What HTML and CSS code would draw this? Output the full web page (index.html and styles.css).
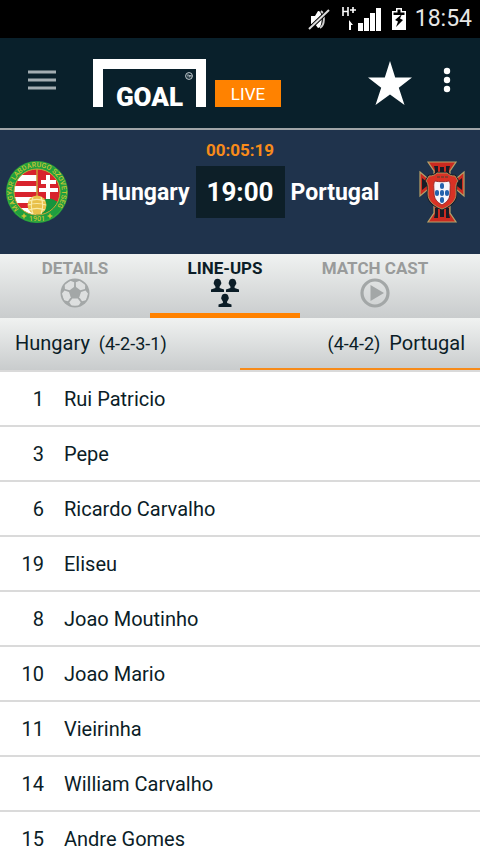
FILE: index.html
```html
<!DOCTYPE html>
<html lang="en">
<head>
  <meta charset="UTF-8">
  <meta name="viewport" content="width=device-width, initial-scale=1.0">
  <title>Hungary - Portugal | Goal Live</title>
  <link rel="stylesheet" href="styles.css">
</head>
<body>
  <div class="status-bar">
    <svg class="mute-icon" width="22" height="24" viewBox="0 0 22 24">
      <path d="M3 9h4l3-5c5-1 5 17 0 17l-3-4H3z" fill="#fff"/>
      <path d="M13 4c4 3 4 14-1 17" fill="none" stroke="#ccc" stroke-width="2"/>
      <path d="M1 22L21 3" stroke="#000" stroke-width="4"/>
      <path d="M1 22L21 3" stroke="#ddd" stroke-width="2"/>
    </svg>
    <svg class="signal-icon" width="40" height="26" viewBox="0 0 40 26">
      <path d="M2 1v9M7 1v9M2 5.500h5M9 4h6M12 1v6" fill="none" stroke="#fff" stroke-width="1.600"/>
      <path d="M8 14l4 5H10v5H8z" fill="#fff"/>
      <path d="M17 17h5v8h-5zM23 12h5v13h-5zM29 7h5v18h-5zM35 2h5v23h-5z" fill="#fff"/>
    </svg>
    <svg class="battery-icon" width="14" height="24" viewBox="0 0 14 24">
      <path d="M4 1h6v3h4v19H0V4h4z" fill="#fff"/>
      <path d="M5.500 2.500h3v3h4V8h-11V5.500h4z" fill="#000"/>
      <path d="M10 7L3 13l3 1.500L4 20l7-7-3-1.500z" fill="#000"/>
    </svg>
    <span class="clock">18:54</span>
  </div>

  <header class="app-bar">
    <button class="icon-button menu" aria-label="Menu">
      <svg width="28" height="20" viewBox="0 0 28 20"><path d="M0 2h28M0 10h28M0 18h28" stroke="#a3adb2" stroke-width="3"/></svg>
    </button>
    <a class="brand" href="#">
      <span class="logo">GOAL
        <svg class="trademark" width="8" height="8" viewBox="0 0 8 8"><circle cx="4" cy="4" r="3.400" fill="none" stroke="#c5ced2"/><path d="M2 3h2M3 3v2.500M4.500 5.500V3l.8 1.200L6 3v2.500" fill="none" stroke="#c5ced2" stroke-width=".7"/></svg>
      </span>
      <span class="live">LIVE</span>
    </a>
    <button class="icon-button favourite" aria-label="Favourite">
      <svg width="44" height="44" viewBox="0 0 44 44"><path d="M22 0l5.200 16.500H44L30.800 26.800 36.500 44 22 33.500 7.500 44l5.700-17.200L0 16.500h16.800z" fill="#fff"/></svg>
    </button>
    <button class="icon-button more" aria-label="More options">
      <svg width="8" height="26" viewBox="0 0 8 26" fill="#fff"><circle cx="4" cy="4" r="3.200"/><circle cx="4" cy="13" r="3.200"/><circle cx="4" cy="22" r="3.200"/></svg>
    </button>
  </header>

  <section class="match">
    <div class="countdown">00:05:19</div>
    <div class="match-row">
      <svg class="crest" width="62" height="62" viewBox="0 0 62 62">
        <defs>
          <clipPath id="inner"><circle cx="31" cy="31" r="23"/></clipPath>
          <path id="ring" d="M13 48A24.800 24.800 0 1 1 49 48"/>
        </defs>
        <circle cx="31" cy="31" r="31" fill="#1f9f3f"/>
        <circle cx="31" cy="31" r="30" fill="none" stroke="#3aa93c"/>
        <g clip-path="url(#inner)">
          <path d="M8 8h46v46H8z" fill="#d8232d"/>
          <path d="M8 14h23v6H8zM8 25h23v6H8zM8 36h23v6H8zM8 47h23v7H8z" fill="#fff"/>
          <path d="M30 54c0-10 5-15 12-17 6 1 9 4 12 5v12z" fill="#16943c"/>
          <path d="M40 14h4v5h6v4h-6v4h8v4h-8v7h-4v-7h-7v-4h7v-4h-5v-4h5z" fill="#fff"/>
          <path d="M31 8v30" stroke="#c99e36" stroke-width="1.500"/>
        </g>
        <circle cx="31" cy="31" r="23" fill="none" stroke="#c2ae3a"/>
        <text class="crest-text"><textPath href="#ring">MAGYAR LABDARUGO SZOVETSEG</textPath></text>
        <circle cx="31" cy="44" r="9.500" fill="#e8c04a"/>
        <path d="M23 40c5-2 11-2 16 0M22 44c6-2 12-2 18 0M23 49c5-2 11-2 16 0M27 36c-2 5-2 12 0 17M35 36c2 5 2 12 0 17" fill="none" stroke="#f9eba8" stroke-width="1.200"/>
        <text class="crest-text" x="31" y="60" text-anchor="middle">1901</text>
        <path d="M18 52l1 2 2 1-2 1-1 2-1-2-2-1 2-1zM44 52l1 2 2 1-2 1-1 2-1-2-2-1 2-1z" fill="#c8c235"/>
      </svg>
      <h1 class="team home">Hungary</h1>
      <div class="kickoff">19:00</div>
      <h1 class="team">Portugal</h1>
      <svg class="crest" width="62" height="62" viewBox="0 0 62 62">
        <g fill="#cb2a20" stroke="#b5a268" stroke-width="1.200">
          <path d="M16 1h28l-6 9v42l6 9H16l6-9V10z"/>
          <path d="M8 11l7 6h30l7-6v24l-7-6H15l-7 6z"/>
        </g>
        <path d="M22 5h4v10h-3V9zM38 5h-4v10h3V9zM22 57h4V47h-3v6zM38 57h-4V47h3v6zM10 17l5 4v4l-5 4zM50 17l-5 4v4l5 4z" fill="#191c26"/>
        <path d="M28 6h4v6h-4zM28 48h4v8h-4z" fill="#191c26"/>
        <path d="M17 15c4 0 6-1 8-3h10c2 2 4 3 8 3l3 5c-3 3-2 8-2 13 0 7-6 12-14 15-8-3-14-8-14-15 0-5 1-10-2-13z" fill="#d93225" stroke="#191c26" stroke-width="2.400"/>
        <path d="M17 15c4 0 6-1 8-3h10c2 2 4 3 8 3l3 5c-3 3-2 8-2 13 0 7-6 12-14 15-8-3-14-8-14-15 0-5 1-10-2-13z" fill="#d93225" stroke="#b5a268" stroke-width=".8"/>
        <path d="M23 20c4 1 10 1 14 0 2 2 1 6 1 12s-3 9-8 12c-5-3-8-6-8-12s-1-10 1-12z" fill="#f6f6fb" stroke="#9c2a28"/>
        <g fill="#2463ad"><rect x="28" y="22" width="4" height="6" rx="2"/><rect x="28" y="29" width="4" height="6" rx="2"/><rect x="28" y="36" width="4" height="6" rx="2"/><rect x="23" y="29" width="4" height="6" rx="2"/><rect x="33" y="29" width="4" height="6" rx="2"/></g>
        <path d="M25 16h3M29 16h3M33 16h3" stroke="#8f3a2c" stroke-width="2"/>
      </svg>
    </div>
  </section>

  <nav class="tabs">
    <a class="tab" href="#details">DETAILS
      <svg width="30" height="30" viewBox="0 0 30 30">
        <defs>
          <clipPath id="ball"><circle cx="15" cy="15" r="13"/></clipPath>
          <g id="patch"><path d="M12.300 9.600h5.400l3-3.800-2.200-3.500h-7L9.300 5.800z"/></g>
        </defs>
        <circle cx="15" cy="15" r="14.500" fill="#a3a7a7"/>
        <g clip-path="url(#ball)" fill="#dddfdf">
          <use href="#patch" transform="rotate(36 15 15)"/>
          <use href="#patch" transform="rotate(108 15 15)"/>
          <use href="#patch" transform="rotate(180 15 15)"/>
          <use href="#patch" transform="rotate(252 15 15)"/>
          <use href="#patch" transform="rotate(324 15 15)"/>
        </g>
      </svg>
    </a>
    <a class="tab active" href="#lineups">LINE-UPS
      <svg width="30" height="30" viewBox="0 0 30 30">
        <defs><path id="player" d="M4 4c0-4.500 7-4.500 7 0 .6 1 .3 2.300-.4 2.800-.2.900-.6 1.300-1 1.700V10l4.400 1.600V14H1v-2.400L5.400 10V8.500c-.4-.4-.8-.8-1-1.700C3.700 6.300 3.400 5 4 4z"/></defs>
        <g fill="#0b1d27"><use href="#player"/><use href="#player" x="15"/><use href="#player" x="7.500" y="15"/></g>
      </svg>
    </a>
    <a class="tab" href="#matchcast">MATCH CAST
      <svg width="30" height="30" viewBox="0 0 30 30"><circle cx="15" cy="15" r="13" fill="none" stroke="#a3a7a7" stroke-width="3.200"/><path d="M10.500 7l13.500 8-13.500 8z" fill="#a3a7a7"/></svg>
    </a>
  </nav>

  <nav class="sides">
    <a class="side" href="#hungary">Hungary <span class="formation">(4-2-3-1)</span></a>
    <a class="side away active" href="#portugal"><span class="formation">(4-4-2)</span> Portugal</a>
  </nav>

  <ul class="players">
    <li><span class="number">1</span>Rui Patricio</li>
    <li><span class="number">3</span>Pepe</li>
    <li><span class="number">6</span>Ricardo Carvalho</li>
    <li><span class="number">19</span>Eliseu</li>
    <li><span class="number">8</span>Joao Moutinho</li>
    <li><span class="number">10</span>Joao Mario</li>
    <li><span class="number">11</span>Vieirinha</li>
    <li><span class="number">14</span>William Carvalho</li>
    <li><span class="number">15</span>Andre Gomes</li>
  </ul>
</body>
</html>
```
FILE: styles.css
```css
* {
  box-sizing: border-box;
}
body {
  margin: 0;
  height: 100vh;
  overflow: hidden;
  font-family: Roboto, sans-serif;
  background: #fff;
  color: #0b1d27;
}
a {
  color: inherit;
  text-decoration: none;
}
svg {
  display: block;
}
.status-bar {
  display: flex;
  align-items: center;
  justify-content: flex-end;
  height: 38px;
  padding-right: 8px;
  background: #000;
  color: #e6e6e6;
}
.signal-icon {
  margin: 0 11px;
}
.clock {
  margin-left: 9px;
  font-size: 23px;
  line-height: 38px;
}
.app-bar {
  display: flex;
  align-items: center;
  height: 92px;
  padding: 0 29px 0 28px;
  background: #09202b;
  border-bottom: 2px solid #a0a5a8;
}
.icon-button {
  padding: 0;
  border: none;
  background: none;
  cursor: pointer;
}
.menu,
.more {
  padding-bottom: 6px;
}
.brand {
  display: flex;
  align-items: flex-end;
  gap: 9px;
  margin-left: 37px;
}
.logo {
  position: relative;
  width: 113px;
  height: 48px;
  padding-top: 14px;
  border: 10px solid #fff;
  border-bottom: none;
  color: #fff;
  font-size: 26px;
  font-weight: 900;
  line-height: 28px;
  text-align: center;
}
.trademark {
  position: absolute;
  top: 3px;
  right: 3px;
}
.live {
  width: 66px;
  height: 27px;
  background: #ff8200;
  color: #fff;
  font-size: 17px;
  line-height: 28px;
  text-align: center;
}
.favourite {
  margin-left: auto;
}
.more {
  margin-left: 31px;
}
.match {
  height: 124px;
  padding: 10px 6px;
  background: #1f334c;
  color: #fff;
}
.countdown {
  color: #f78b1a;
  font-size: 17px;
  font-weight: 700;
  line-height: 20px;
  text-align: center;
}
.match-row {
  display: grid;
  grid-template-columns: 62px 1fr 89px 1fr 62px;
  align-items: center;
  column-gap: 6px;
  height: 64px;
}
.crest-text {
  fill: #c8c235;
  font-size: 7px;
  font-weight: 500;
}
.team {
  margin: 0;
  font-size: 23px;
  font-weight: 700;
}
.home {
  text-align: right;
}
.kickoff {
  background: #0d1f28;
  font-size: 26px;
  font-weight: 700;
  line-height: 52px;
  text-align: center;
}
.tabs {
  display: flex;
  background: linear-gradient(#f0f2f1, #c9cccd);
}
.tab {
  display: flex;
  flex: 0 0 150px;
  flex-direction: column;
  align-items: center;
  height: 64px;
  padding-top: 4px;
  border-bottom: 5px solid transparent;
  color: #999b9b;
  font-size: 17px;
  font-weight: 700;
  line-height: 20px;
}
.tab.active {
  border-bottom-color: #ff8200;
  color: #0b1d27;
}
.sides {
  display: flex;
  background: linear-gradient(#f0f2f1, #c9cccd);
  border-bottom: 2px solid #dadada;
}
.side {
  flex: 1;
  height: 52px;
  padding: 0 15px;
  border-bottom: 2px solid transparent;
  font-size: 20px;
  line-height: 50px;
}
.away {
  text-align: right;
}
.side.active {
  border-bottom-color: #f78b1a;
}
.formation {
  margin: 0 4px;
  font-size: 18px;
}
.players {
  margin: 0;
  padding: 0;
  list-style: none;
}
.players li {
  display: flex;
  gap: 20px;
  height: 55px;
  border-bottom: 2px solid #dadada;
  font-size: 20px;
  line-height: 54px;
}
.number {
  width: 44px;
  text-align: right;
}
```
